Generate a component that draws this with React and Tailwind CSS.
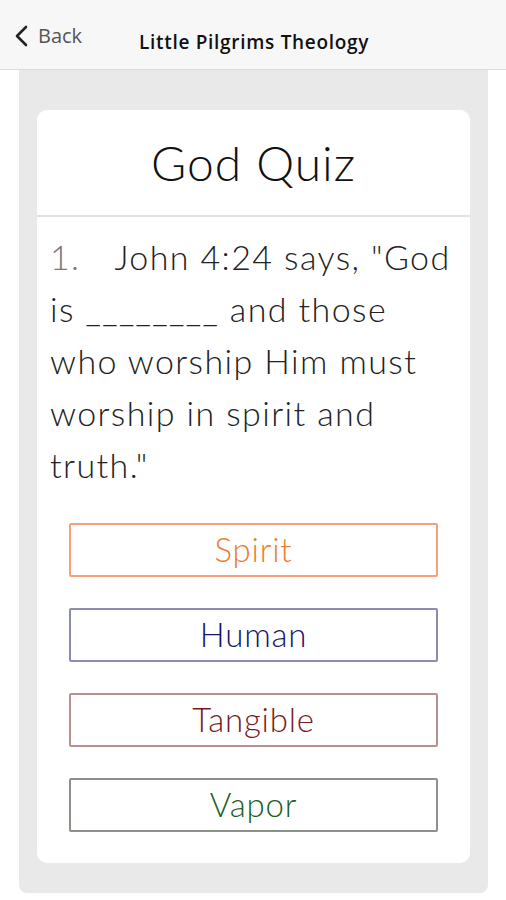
import React from 'react';

const options = [
  { label: 'Spirit', cls: 'border-[#f5a07a] text-[#f07a2e]' },
  { label: 'Human', cls: 'border-[#8c8cb0] text-[#15156a]' },
  { label: 'Tangible', cls: 'border-[#b89090] text-[#761a22]' },
  { label: 'Vapor', cls: 'border-[#8a928a] text-[#1a601a]' },
];

const lines = ['John 4:24 says, "God', 'is ________ and those', 'who worship Him must', 'worship in spirit and', 'truth."'];

const App = () => {
  return (
    <div className="w-[506px] h-[900px] bg-white flex flex-col" style={{ fontFamily: 'Lato, "Open Sans", sans-serif' }}>
      <div className="h-[70px] bg-[#f7f7f7] border-b border-[#dcdcdc] flex items-center relative shrink-0">
        <div className="flex items-center pl-[14px] gap-[8px] text-[#555] pt-[3px]">
          <svg width="16" height="24" viewBox="0 0 16 24" fill="none">
            <path d="M12 3 L3 12 L12 21" stroke="#222" strokeWidth="2.6" strokeLinecap="round" strokeLinejoin="round" />
          </svg>
          <span className="text-[20px]" style={{ fontFamily: '"Open Sans", sans-serif' }}>Back</span>
        </div>
        <div className="absolute left-[139px] top-[28px] text-[19px] font-semibold text-[#111] tracking-[0.7px]" style={{ fontFamily: '"Open Sans", sans-serif' }}>
          Little Pilgrims Theology
        </div>
      </div>
      <div className="mx-[19px] w-[469px] bg-[#e9e9e9] rounded-b-[8px] pt-[40px] pb-[30px] px-[18px]">
        <div className="bg-white rounded-[10px] pb-[31px]">
          <div className="h-[107px] flex items-center justify-center border-b-2 border-[#e2e2e2] text-[48px] font-light text-[#111] tracking-[1px]">
            God Quiz
          </div>
          <div className="px-[13px] pt-[14px] text-[34px] leading-[52px] text-[#222] font-light tracking-[1.4px] whitespace-nowrap">
            {lines.map((l, i) => (
              <div key={i}>
                {i === 0 && <span className="text-[#777] mr-[34px]">1.</span>}
                {l}
              </div>
            ))}
          </div>
          <div className="flex flex-col gap-[31px] px-[32px] mt-[32px]">
            {options.map((o) => (
              <div key={o.label} className={`h-[54px] border-2 rounded-[2px] flex items-center justify-center text-[33px] font-light tracking-[0.8px] ${o.cls}`}>
                {o.label}
              </div>
            ))}
          </div>
        </div>
      </div>
    </div>
  );
};

export default App;
